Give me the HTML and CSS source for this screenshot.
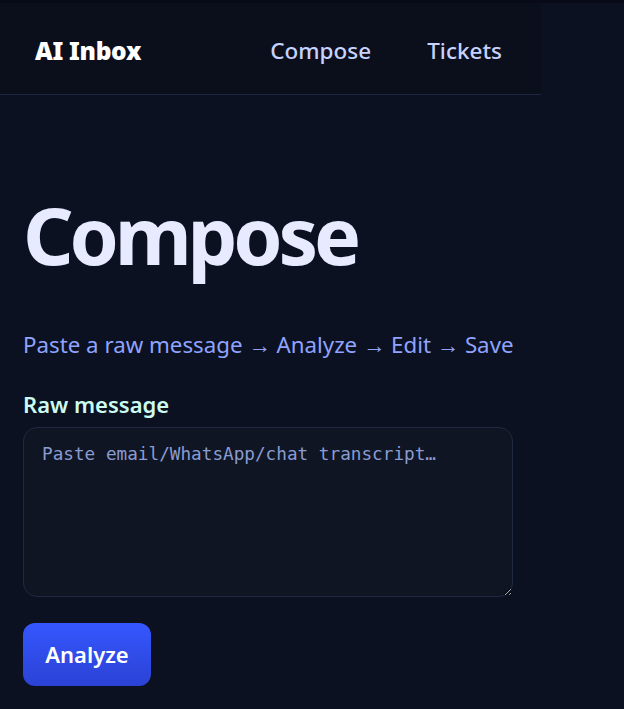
FILE: index.html
```html
<!DOCTYPE html>
<html lang="en">
<head>
<meta charset="utf-8">
<title>AI Inbox — Compose</title>
<link rel="stylesheet" href="styles.css">
</head>
<body>
<div class="topstrip"></div>
<header class="site-header">
  <a class="brand" href="#">AI Inbox</a>
  <nav class="nav">
    <a href="#">Compose</a>
    <a href="#">Tickets</a>
  </nav>
</header>
<main class="main">
  <h1 class="title">Compose</h1>
  <p class="subtitle">Paste a raw message → Analyze → Edit → Save</p>
  <label class="label" for="raw">Raw message</label>
  <textarea id="raw" class="raw" placeholder="Paste email/WhatsApp/chat transcript…"></textarea>
  <button class="btn" type="button">Analyze</button>
</main>
</body>
</html>
```
FILE: styles.css
```css
html, body {
  margin: 0;
  padding: 0;
}
body {
  background: #0b1120;
  font-family: "Noto Sans", "Open Sans", sans-serif;
  color: #e6e9ff;
  min-height: 709px;
}
.topstrip {
  height: 3px;
  background: #080a17;
}
.site-header {
  width: 541px;
  height: 92px;
  box-sizing: border-box;
  border-bottom: 1px solid #1f2540;
  background: #0a0f1b;
  display: flex;
  align-items: center;
  padding: 3px 39px 0 35px;
}
.brand {
  color: #ffffff;
  font-weight: 900;
  font-size: 24.5px;
  text-decoration: none;
  letter-spacing: -0.3px;
}
.nav {
  margin-left: auto;
  display: flex;
  gap: 56px;
}
.nav a {
  color: #c7d2fe;
  font-size: 22.5px;
  font-weight: 500;
  text-decoration: none;
}
.main {
  padding: 0 23px;
  width: 490px;
  display: flex;
  flex-direction: column;
  align-items: flex-start;
}
.title {
  margin: 100px 0 0;
  font-size: 79px;
  font-weight: 700;
  line-height: 1;
  color: #e8ebff;
  letter-spacing: -4.2px;
}
.subtitle {
  margin: 56px 0 0;
  font-size: 22.3px;
  line-height: 1.3;
  color: #8fa3ff;
  white-space: nowrap;
}
.label {
  margin-top: 30px;
  font-size: 22px;
  font-weight: 600;
  color: #ccfbf1;
}
.raw {
  margin-top: 8px;
  width: 490px;
  height: 170px;
  box-sizing: border-box;
  background: #0f1522;
  border: 1px solid #1f2940;
  border-radius: 14px;
  padding: 16px 18px;
  font-family: "DejaVu Sans Mono", monospace;
  font-size: 17.7px;
  color: #d6defa;
  resize: vertical;
  outline: none;
}
.raw::placeholder {
  color: #8a9cd2;
}
.btn {
  margin-top: 26px;
  width: 128px;
  height: 63px;
  border: none;
  border-radius: 12px;
  background: linear-gradient(180deg, #3557ff 0%, #2b42d4 100%);
  color: #ffffff;
  font-family: "Noto Sans", sans-serif;
  font-size: 22px;
  font-weight: 600;
  cursor: pointer;
}
```
